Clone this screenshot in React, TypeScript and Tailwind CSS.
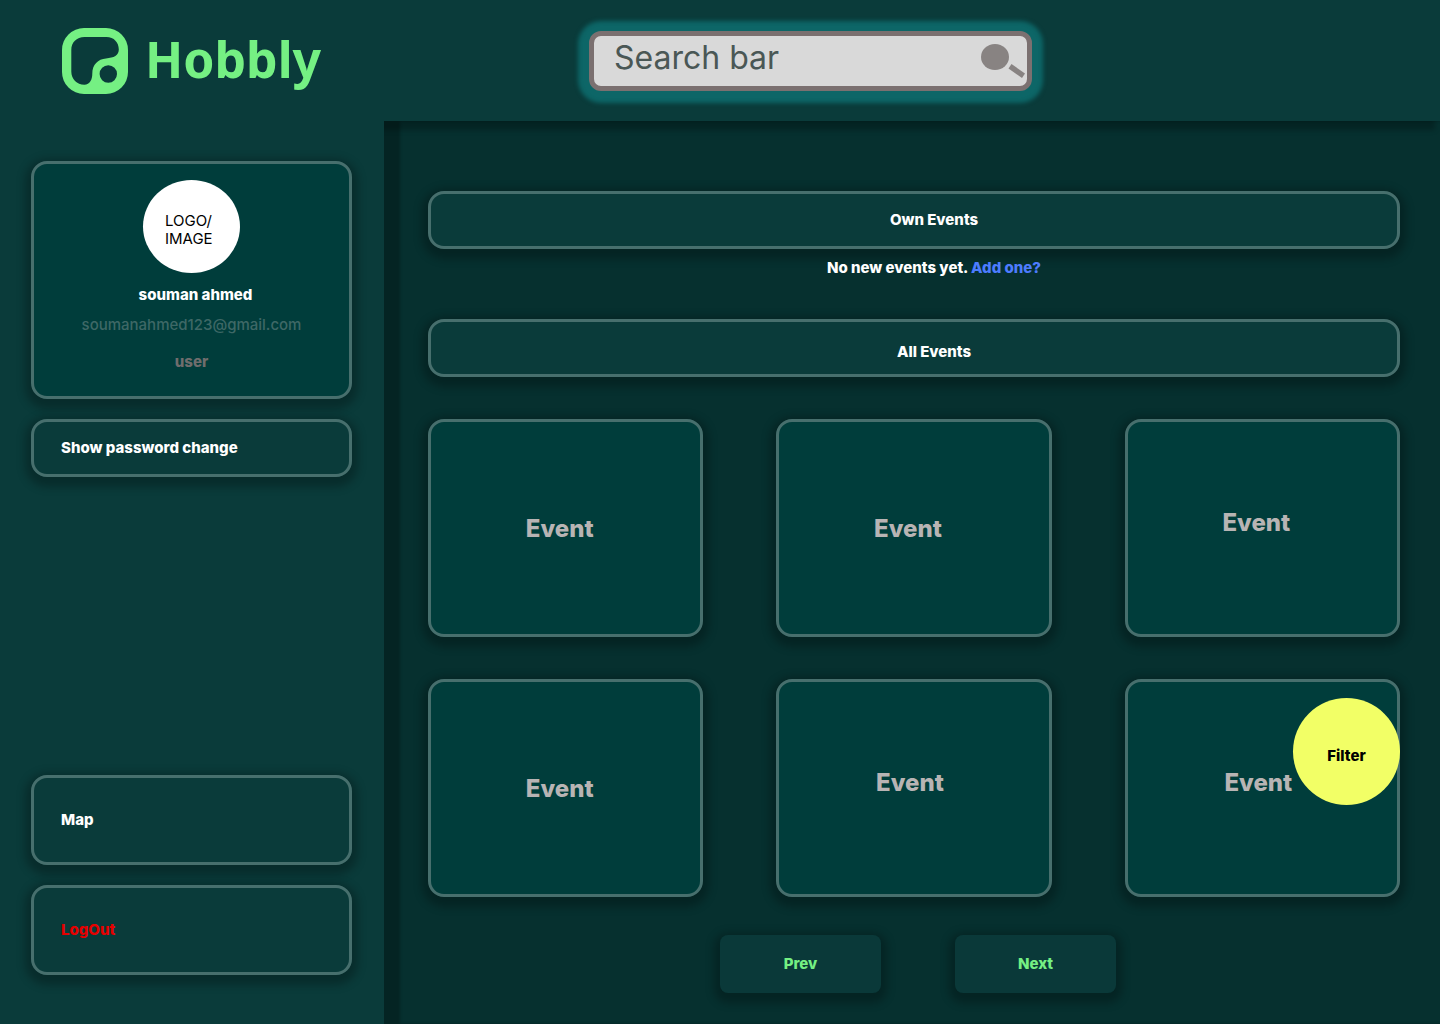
import React from "react";

const events = [
  { id: 1, offset: "pt-0.5 pr-3" },
  { id: 2, offset: "pt-0.5 pr-3" },
  { id: 3, offset: "pr-3 pb-2.5" },
  { id: 4, offset: "pt-0.5 pr-3" },
  { id: 5, offset: "pr-2 pb-2.5" },
  { id: 6, offset: "pr-2 pb-2.5" },
];

const raised = "shadow-[0_4px_8px_6px_rgba(0,0,0,0.25)]";
const outlined = `rounded-2xl border-3 border-[#476f6d] ${raised}`;

function Logo() {
  return (
    <a href="#" className="flex items-center gap-[17px] text-[#75f083]">
      <svg width="66" height="66" viewBox="0 0 66 66" aria-hidden="true">
        <path
          fill="currentColor"
          fillRule="evenodd"
          d="M22 0H44A22 22 0 0 1 66 22V44A22 22 0 0 1 44 66H22A22 22 0 0 1 0 44V22A22 22 0 0 1 22 0ZM22.5 9C14.5 9 9.3 14.5 9.3 22V43.5C9.3 51 15 56.7 22.3 56.7C28 56.7 30.3 51.5 30.3 45.5C30.3 36.5 36 31 44 30.4C52 29.8 56.8 27.5 56.8 21.5C56.8 14.5 52 9 44.5 9ZM46.3 37.3A8.7 8.7 0 1 0 46.3 54.7A8.7 8.7 0 1 0 46.3 37.3Z"
        />
      </svg>
      <span className="pb-1 font-['Noto_Sans',sans-serif] text-[50px] leading-[66px] font-bold">Hobbly</span>
    </a>
  );
}

function SearchBar() {
  return (
    <form
      role="search"
      onSubmit={(e) => e.preventDefault()}
      className="flex h-[60px] w-full max-w-[443px] items-start rounded-xl border-5 border-[#7b7070] bg-[#d9d9d9] shadow-[0_1px_4px_11px_#0d6667]"
    >
      <input
        type="text"
        aria-label="Search bar"
        placeholder="Search bar"
        className="h-11 min-w-0 flex-1 bg-transparent pl-5 text-[32px] text-[#4a5755] outline-none placeholder:text-[#4a5755] placeholder:opacity-100"
      />
      <button type="submit" aria-label="Search" className="mt-2 mr-0.5 shrink-0">
        <svg width="45" height="36" viewBox="0 0 45 36" fill="#888382" aria-hidden="true">
          <ellipse cx="15" cy="13" rx="14" ry="13" />
          <path d="M31.5 20L45 29.5L42 34L28.5 24.5Z" />
        </svg>
      </button>
    </form>
  );
}

function Sidebar() {
  return (
    <aside className="relative z-20 flex w-96 shrink-0 flex-col bg-[#0a3b3a] pt-10 pr-8 pb-[49px] pl-[31px] font-extrabold text-white">
      <section className={`${outlined} flex h-[238px] flex-col items-center bg-[#003d3b] pt-4`}>
        <div className="flex h-[93px] w-[97px] items-center justify-center rounded-[50%] bg-white pt-1.5 font-normal text-black">
          <p className="w-[53px]">LOGO/ IMAGE</p>
        </div>
        <h2 className="mt-[13px] pl-2">souman ahmed</h2>
        <p className="mt-3 font-medium text-[#3e6866]">soumanahmed123@gmail.com</p>
        <p className="mt-[19px] text-[#6f6d6d]">user</p>
      </section>
      <button className={`${outlined} mt-5 h-[58px] px-[27px] text-left`}>Show password change</button>
      <nav className="mt-auto flex flex-col gap-5">
        <a href="#map" className={`${outlined} flex h-[90px] items-center px-[27px]`}>
          Map
        </a>
        <button className={`${outlined} h-[90px] px-[27px] text-left text-[#e60000]`}>LogOut</button>
      </nav>
    </aside>
  );
}

export default function App() {
  return (
    <div className="flex min-h-screen flex-col bg-[#06302f] font-['Inter',sans-serif] text-[15px] leading-[18px]">
      <header className="relative z-10 flex h-[121px] items-center bg-[#0a3b3a] shadow-[-5px_9px_5px_0_rgba(0,0,0,0.25)]">
        <div className="w-96 shrink-0 pl-[62px]">
          <Logo />
        </div>
        <div className="flex flex-1 justify-center pr-[203px]">
          <SearchBar />
        </div>
      </header>

      <div className="flex flex-1">
        <Sidebar />
        <main className="flex-1 pt-[70px] pr-10 pb-[31px] pl-11 font-extrabold text-white shadow-[inset_16px_0_3px_0_rgba(0,0,0,0.25)]">
          <h2 className={`${outlined} flex h-[58px] items-center justify-center bg-[#0a3b3a] pl-10`}>Own Events</h2>
          <p className="mt-2.5 pl-10 text-center">
            No new events yet.{" "}
            <a href="#add" className="text-[#4d7cff]">
              Add one?
            </a>
          </p>
          <h2 className={`${outlined} mt-[42px] flex h-[58px] items-center justify-center bg-[#0a3b3a] pt-2 pl-10`}>
            All Events
          </h2>

          <div className="mt-[42px] grid grid-cols-3 gap-x-[73px] gap-y-[42px]">
            {events.map((event) => (
              <article
                key={event.id}
                className={`${outlined} ${event.offset} relative flex h-[218px] items-center justify-center bg-[#003d3b] text-2xl text-[#b8b4b4]`}
              >
                Event
                {event.id === 6 && (
                  <button className="absolute top-4 -right-[3px] size-[107px] rounded-full bg-[#f2ff66] pt-2 text-[15px] leading-[18px] text-black">
                    Filter
                  </button>
                )}
              </article>
            ))}
          </div>

          <div className="mt-[38px] flex justify-center gap-[74px] pl-2 text-[#75f083]">
            <button className={`${raised} h-[58px] w-[161px] rounded-lg bg-[#0a3939]`}>Prev</button>
            <button className={`${raised} h-[58px] w-[161px] rounded-lg bg-[#0a3939]`}>Next</button>
          </div>
        </main>
      </div>
    </div>
  );
}
